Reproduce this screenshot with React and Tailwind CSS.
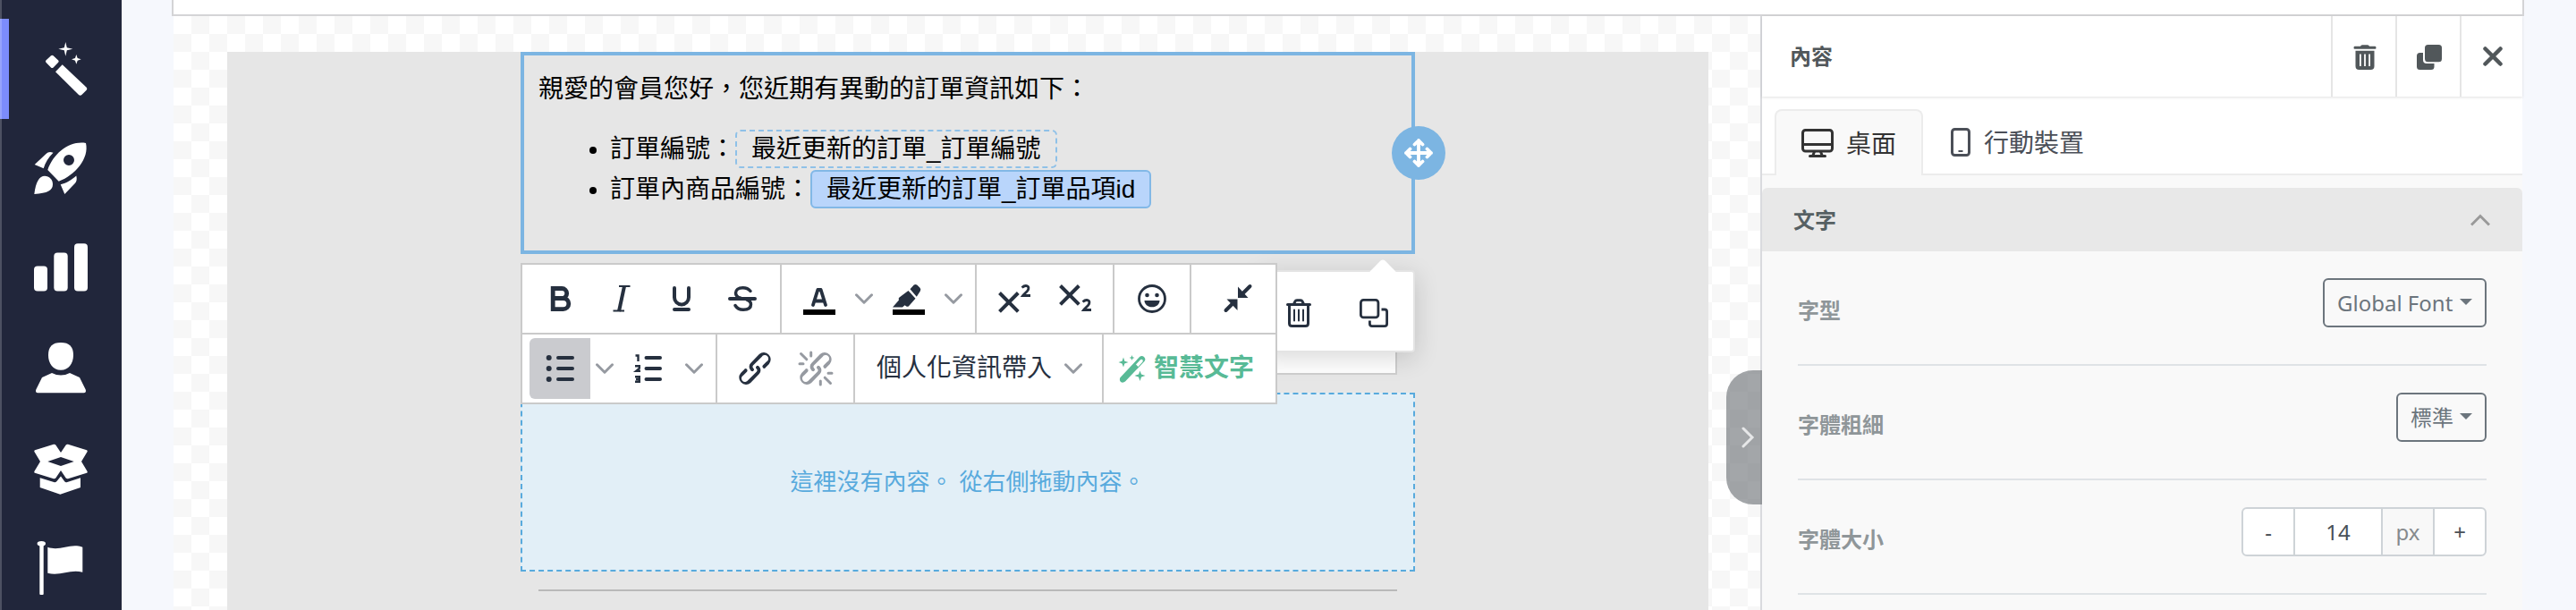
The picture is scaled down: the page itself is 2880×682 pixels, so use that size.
import { useState } from 'react';

const NAV_ITEMS = [
  {
    label: '自動化旅程',
    icon: (
      <>
        <path d="M19 15.3l-5.600 5.300q-1 1.100 0 2.200l5.600 5.700q1.300 1 2.600 0l5.600-5.700q1-1.100 0-2.200l-5.600-5.300q-1.300-1-2.600 0z" />
        <path d="M31.700 25.300L24 33.300l26 25.700q1.700 1.500 3.400 0l5.300-5.200q1.300-1.500 0-3z" />
        <path d="M35.300 0l1.500 6.200 6.500 1.500-6.500 1.500-1.500 6.500-1.500-6.500-6.500-1.500 6.500-1.500z" />
        <path d="M47.300 14l1.400 4 4 1.300-4 1.400-1.400 4-1.300-4-4-1.400 4-1.300z" />
      </>
    ),
  },
  {
    label: '行銷活動',
    icon: (
      <>
        <path
          fillRule="evenodd"
          d="M58 1C40-2 22 12 15.300 31l12.400 12.700C46 37 62 18 58 1zM39 14a6 6 0 1 1 0 12 6 6 0 0 1 0-12z"
        />
        <path d="M21.500 11.700c-4-1.500-6-.500-8 1.300L.7 25l10 4.300c2-7 5.500-12.300 10.800-17.600z" />
        <path d="M47.300 37.500c1 4 .3 6.500-1.500 8.500L34.300 58l-4.600-10.700c7-2 12-4.800 17.600-9.800z" />
        <path d="M.3 58C2 44 6 37.700 12 37.700c5 0 9 4 9 9.300C21 54 15 57 .3 58z" />
      </>
    ),
  },
  {
    label: '數據分析',
    icon: (
      <>
        <rect x="0" y="26.500" width="15" height="28" rx="4" />
        <rect x="22.300" y="11.600" width="15.400" height="43" rx="4" />
        <rect x="45" y="1.300" width="15" height="53.300" rx="4" />
      </>
    ),
  },
  {
    label: '會員',
    icon: (
      <>
        <path d="M30 0c9.500 0 14 4.500 14 14s-5.500 16.800-14 16.800S16 23.500 16 14 20.500 0 30 0z" />
        <path d="M20 34l-11 5L2.300 52.500c-.8 2 0 3.800 2 3.800h51.400c2 0 2.800-1.800 2-3.800L51 39l-11-5q-10 5-20 0z" />
      </>
    ),
  },
  {
    label: '商品',
    icon: (
      <>
        <path
          fillRule="evenodd"
          d="M1 8.300L22 1.700q1.500-.3 2.300.8L30 11l5.700-8.500q.8-1.100 2.300-.8L59 8.300q1 .5.600 1.700L53 21l6.600 11q.4 1.300-.6 1.700L38 40.300q-1.500.2-2.300-.8L30 31l-5.700 8.500q-.8 1-2.300.8L1 33.700Q0 33.300.4 32L7 21 .4 10Q0 8.800 1 8.300zM15.300 21L30 26l14.700-5L30 16z"
        />
        <path d="M6.700 39.300l16.300 5q1.500 0 2.500-1.300l4.500-5.500 4 5.500q1 1.500 2.500 1.300l15.500-5V50l-22.700 7.700L6.700 50z" />
      </>
    ),
  },
  {
    label: '任務',
    icon: (
      <>
        <ellipse cx="8.300" cy=".8" rx="4.700" ry="2.800" />
        <rect x="6.300" y="1" width="4.400" height="57" rx="1" />
        <path d="M15.300 4.700c14 5 25-5 39 0v28c-14-4-25 5-39 1z" />
      </>
    ),
  },
];

const LINK_PATH =
  'M6.200 12.300a1 1 0 0 1 1.400 1.400l-2 2a2 2 0 1 0 2.600 2.800l4.800-4.800a1 1 0 0 0 0-1.400 1 1 0 1 1 1.400-1.300 2.900 2.900 0 0 1 0 4L9.600 20a3.900 3.900 0 0 1-5.500-5.500l2-2zm11.600-.6a1 1 0 0 1-1.400-1.400l2-2a2 2 0 1 0-2.600-2.800L11 10.300a1 1 0 0 0 0 1.400A1 1 0 1 1 9.600 13a2.900 2.900 0 0 1 0-4L14.400 4a3.900 3.900 0 0 1 5.500 5.500l-2 2z';

function ToolButton({ label, active, children }) {
  return (
    <button
      type="button"
      aria-label={label}
      aria-pressed={active}
      className={`w-[68px] h-[68px] flex items-center justify-center ${active ? 'bg-[#cacbcf] rounded-l-md' : ''}`}
    >
      <svg className="w-12 h-12" viewBox="0 0 48 48" fill="none" stroke="currentColor" strokeWidth="4" strokeLinecap="round" strokeLinejoin="round">
        {children}
      </svg>
    </button>
  );
}

function Chevron() {
  return (
    <svg className="w-5 h-3 text-[#969aa1]" viewBox="0 0 20 12" fill="none" stroke="currentColor" strokeWidth="3" strokeLinecap="round" strokeLinejoin="round">
      <path d="M1.500 1.800L10 10.200l8.500-8.400" />
    </svg>
  );
}

function MenuArrow({ label }) {
  return (
    <button type="button" aria-label={label} className="w-8 h-[68px] flex items-center justify-center">
      <Chevron />
    </button>
  );
}

function ToolGroup({ grow, children }) {
  return (
    <div className={`flex justify-end items-center px-2 border-r-2 border-[#cacaca] last:border-r-0 ${grow ? 'flex-1' : ''}`}>
      {children}
    </div>
  );
}

function Toolbar() {
  return (
    <div className="absolute z-20 left-0 top-full mt-[10px] w-[846px] bg-white border-2 border-[#cacaca] text-[#26303f]">
      <div className="flex h-[78px] border-b-2 border-[#cacaca]">
        <ToolGroup>
          <ToolButton label="粗體">
            <path strokeWidth="4.800" strokeLinejoin="miter" d="M16.200 12.500h10a5.300 5.300 0 0 1 0 11h-10zM16.200 23.500h11.500a6 6 0 0 1 0 12.200H16.200z" />
          </ToolButton>
          <ToolButton label="斜體">
            <path strokeLinecap="butt" d="M28 10l-6 28" />
            <path strokeWidth="2" strokeLinecap="butt" d="M22 10h12.500M15.500 37.500H28" />
          </ToolButton>
          <ToolButton label="底線">
            <path d="M16 12v10.500a8 8 0 0 0 16 0V12M16 36h16" />
          </ToolButton>
          <ToolButton label="刪除線">
            <path strokeWidth="3.500" d="M33 15.500c-2-2.500-5-3.800-8.500-3.800-5 0-8 2.300-8 5.800 0 3 2 4.800 5.500 5.800M29 25c3 1 4.500 2.800 4.500 5.300 0 4-3.500 6-8.500 6-4 0-7-1.500-9-4.800" />
            <path d="M10 24h28" />
          </ToolButton>
        </ToolGroup>
        <ToolGroup>
          <ToolButton label="文字顏色">
            <path d="M17 31l5.300-17h3.400L31 31M19 26.500h10" strokeWidth="3.800" />
            <path d="M6 39h36" stroke="#000" strokeWidth="6" strokeLinecap="butt" />
          </ToolButton>
          <MenuArrow label="文字顏色選單" />
          <ToolButton label="背景顏色">
            <g fill="currentColor" stroke="none">
              <path d="M25.500 13.200l4.300-4.600q1.700-1.300 3.400 0l3.300 3.200q1.500 1.700.3 3.600l-4 6.400z" />
              <path d="M23.500 15l8 8.800-7.500 8.400q-1.500 1.200-3 0l-1.500-1-2.500 2.200H6l7-8q-.8-1.800.5-3z" />
            </g>
            <path d="M6 39h36" stroke="#000" strokeWidth="6" strokeLinecap="butt" />
          </ToolButton>
          <MenuArrow label="背景顏色選單" />
        </ToolGroup>
        <ToolGroup>
          <ToolButton label="上標">
            <path strokeLinecap="butt" d="M7.500 17.500l20.800 20.800M28.300 17.500L7.500 38.300" />
            <path strokeWidth="2.800" strokeLinecap="butt" strokeLinejoin="miter" d="M32.500 11.500c4-3.500 8-2 7.300 1.500-.5 2.800-4.500 5-6.300 7.500H42" />
          </ToolButton>
          <ToolButton label="下標">
            <path strokeLinecap="butt" d="M7.500 9.500l20.800 20.800M28.300 9.500L7.500 30.300" />
            <path strokeWidth="2.800" strokeLinecap="butt" strokeLinejoin="miter" d="M32.500 27.500c4-3.500 8-2 7.300 1.500-.5 2.800-4.500 5-6.300 7.500H42" />
          </ToolButton>
        </ToolGroup>
        <ToolGroup>
          <ToolButton label="表情符號">
            <circle cx="24" cy="24" r="14.500" strokeWidth="2.800" />
            <g fill="currentColor" stroke="none">
              <circle cx="18.500" cy="20" r="2.300" />
              <circle cx="29.500" cy="20" r="2.300" />
              <path d="M15.500 26h17c0 4-3.500 7.300-8.500 7.300S15.500 30 15.500 26z" />
            </g>
          </ToolButton>
        </ToolGroup>
        <ToolGroup grow>
          <ToolButton label="收合工具列">
            <path d="M37.500 10l-9 9M10.500 37l8-8" />
            <g fill="currentColor" stroke="none">
              <path d="M24 10.500l11.500 12.500H24z" />
              <path d="M23.500 37V24.500H11.500z" />
            </g>
          </ToolButton>
        </ToolGroup>
      </div>
      <div className="flex h-[76px]">
        <ToolGroup>
          <ToolButton label="項目符號" active>
            <path d="M22 12h16M22 24h16M22 36h16" />
            <g fill="currentColor" stroke="none">
              <circle cx="11.700" cy="12" r="3" />
              <circle cx="11.700" cy="24" r="3" />
              <circle cx="11.700" cy="36" r="3" />
            </g>
          </ToolButton>
          <MenuArrow label="項目符號選單" />
          <ToolButton label="編號清單">
            <path d="M20.500 12H36M20.500 24H36M20.500 36H36" />
            <path strokeWidth="2.400" strokeLinecap="butt" strokeLinejoin="miter" d="M8.500 9.500h3V16M8 21.200h4.800v2.600L9.200 26.800H14M8 33.200h4.800v5.600H8M9 36h4" />
          </ToolButton>
          <MenuArrow label="編號清單選單" />
        </ToolGroup>
        <ToolGroup>
          <ToolButton label="插入連結">
            <path transform="scale(2)" fill="currentColor" stroke="none" d={LINK_PATH} />
          </ToolButton>
          <ToolButton label="移除連結">
            <g className="text-[#969aa1]">
              <path transform="scale(2)" fill="currentColor" stroke="none" d={LINK_PATH} />
              <path strokeWidth="3" d="M7.500 7.500l6.300 6.300M18.700 6v4M6 18.700h4M34.200 34.200l6.300 6.300M29.300 38v4M38 29.300h4" />
            </g>
          </ToolButton>
        </ToolGroup>
        <ToolGroup>
          <button type="button" className="flex items-center gap-[14px] h-[68px] pl-4 pr-[14px] text-[28px] leading-9 whitespace-nowrap">
            個人化資訊帶入
            <Chevron />
          </button>
        </ToolGroup>
        <ToolGroup grow>
          <button type="button" className="flex items-center gap-2 h-[68px] pl-2 pr-4 text-[28px] leading-9 font-bold whitespace-nowrap text-[#58ba96]">
            <svg className="w-8 h-8 shrink-0" viewBox="0 0 32 32" fill="currentColor">
              <path fillRule="evenodd" d="M2.500 26L24 3q2.500-2 5 0 2.500 2.500.500 5L8 30.500q-2.500 2-5 .500-2-2.500-.500-5zM20 11.500l2.500 2.500 5-5.500q.7-1.800-.500-2.500t-2.300.500z" />
              <path d="M6 3.500l1.300 4.200L11.500 9l-4.200 1.500L6 14.500l-1.500-4L.5 9l4-1.300zM15.500 1l.8 2.200 2.200.8-2.200.8-.8 2.200-.8-2.200-2.200-.8 2.200-.8zM24.500 18.500l1.500 4 4.500 1.500-4.500 1.500-1.500 4.500-1.500-4.500-4.500-1.500 4.500-1.500z" />
            </svg>
            智慧文字
          </button>
        </ToolGroup>
      </div>
    </div>
  );
}

function BlockActions() {
  return (
    <div className="absolute z-10 right-0 top-full mt-[18px] pr-[2px] flex items-center h-[92px] bg-white border-2 border-[#e4e4e4] rounded-sm shadow-[0_6px_28px_rgba(0,0,0,0.16)] text-[#26303f]">
      <span className="absolute right-[22px] -top-[10px] w-[24px] h-[24px] rotate-45 bg-white rounded-sm" />
      <button type="button" aria-label="刪除區塊" className="w-[84px] h-full flex items-center justify-center pt-1">
        <svg className="w-8 h-8" viewBox="0 0 32 32" fill="none" stroke="currentColor" strokeWidth="3" strokeLinecap="round">
          <path d="M3.500 6.500h25M10.500 6l1.500-3q.5-1.200 2-1.200h4q1.500 0 2 1.200L21.500 6M5.500 7.500v20q0 3 3 3h15q3 0 3-3v-20" />
          <path strokeWidth="2" d="M11 12.500v12M16 12.500v12M21 12.500v12" />
        </svg>
      </button>
      <button type="button" aria-label="複製區塊" className="w-[84px] h-full flex items-center justify-center pt-1">
        <svg className="w-8 h-8" viewBox="0 0 32 32" fill="none" stroke="currentColor" strokeWidth="2.800">
          <rect x="1.400" y="1.400" width="19.500" height="19.500" rx="3" />
          <path d="M24.500 12H28q2.600 0 2.600 2.600V28q0 2.600-2.600 2.600H14q-2.600 0-2.600-2.600v-3.500" />
        </svg>
      </button>
    </div>
  );
}

function Canvas() {
  return (
    <main className="flex-1 min-w-0 pt-10 pl-[60px] pr-[58px] bg-[conic-gradient(#f7f7f7_25%,#fff_0_50%,#f7f7f7_0_75%,#fff_0)] bg-[length:40px_40px]">
      <div className="h-full bg-[#e6e6e6]">
        <div className="max-w-[1000px] mx-auto font-['Liberation_Sans','Noto_Sans_CJK_TC',sans-serif]">
          <section className="relative px-5 pt-[22px] pb-[50px] text-[28px] text-black">
            <div className="absolute inset-0 border-4 border-[#7cb5e2] pointer-events-none" />
            <p className="leading-10">親愛的會員您好，您近期有異動的訂單資訊如下：</p>
            <ul className="list-disc mt-6 pl-20 leading-[45px]">
              <li>
                訂單編號：
                <span className="px-4 py-1 border-2 border-dashed border-[#8fc1e8] rounded-md">最近更新的訂單_訂單編號</span>
              </li>
              <li>
                訂單內商品編號：
                <span className="px-4 py-1 border-2 border-[#82b8e6] bg-[#b9d5fb] rounded-md">最近更新的訂單_訂單品項id</span>
              </li>
            </ul>
            <button
              type="button"
              aria-label="移動區塊"
              className="absolute -right-[34px] top-1/2 -translate-y-1/2 w-[60px] h-[60px] rounded-full bg-[#7cb5e2] flex items-center justify-center"
            >
              <svg className="w-8 h-8" viewBox="0 0 32 32" fill="none" stroke="#fff" strokeWidth="3.800" strokeLinecap="round" strokeLinejoin="round">
                <path d="M16 2v28M2 16h28M11.500 6.500L16 2l4.500 4.500M11.500 25.500L16 30l4.500-4.500M6.500 11.500L2 16l4.500 4.500M25.500 11.500L30 16l-4.500 4.500" />
              </svg>
            </button>
            <Toolbar />
            <BlockActions />
          </section>

          <div className="mx-5 mt-5 h-[115px] bg-white border-2 border-[#cfcfcf]" />

          <div className="mt-5 h-[200px] flex items-center justify-center border-2 border-dashed border-[#58aadd] bg-[#e2eff7] text-[26px] leading-9 text-[#58aadd]">
            這裡沒有內容。 從右側拖動內容。
          </div>
          <hr className="mx-5 mt-5 border-t-2 border-[#b9b9b9]" />
        </div>
      </div>
    </main>
  );
}

function SettingRow({ label, htmlFor, children }) {
  return (
    <div className="flex items-start justify-between h-32 pt-[30px] border-b-2 border-[#dfe3e6]">
      <label htmlFor={htmlFor} className="py-[18px] text-2xl leading-9 font-bold text-[#8f9699]">{label}</label>
      {children}
    </div>
  );
}

function SettingSelect({ id, option }) {
  return (
    <div className="relative">
      <select id={id} className="block appearance-none h-[55px] pl-[14px] pr-[35px] border-2 border-[#6c757d] rounded-md bg-transparent text-2xl text-[#6c757d]">
        <option>{option}</option>
      </select>
      <svg className="absolute right-4 top-[23px] w-[14px] h-[7px] pointer-events-none" viewBox="0 0 14 7" fill="#6c757d">
        <path d="M0 0h14L7 7z" />
      </svg>
    </div>
  );
}

function SettingsPanel() {
  const [size, setSize] = useState(14);

  return (
    <aside className="relative w-[852px] shrink-0 border-l-2 border-[#d9dade] bg-[#f9f9f9]">
      <button
        type="button"
        aria-label="收合面板"
        className="absolute -left-10 top-[396px] w-10 h-[150px] rounded-l-[30px] bg-[#6b7074]/62 flex items-center justify-center pl-2"
      >
        <svg className="w-4 h-6" viewBox="0 0 16 24" fill="none" stroke="#e6e7e8" strokeWidth="3" strokeLinecap="round">
          <path d="M3 2l10 10L3 22" />
        </svg>
      </button>

      <header className="relative flex h-[90px] items-stretch bg-white text-[#51575a] shadow-[0_1px_3px_rgba(0,0,0,0.12)]">
        <h2 className="flex-1 self-center pl-[31px] text-2xl leading-9 font-bold">內容</h2>
        <button type="button" aria-label="刪除" className="w-[72px] pt-[2px] pl-[2px] flex items-center justify-center border-l-2 border-[#e5e5e5]">
          <svg className="w-[26px] h-7" viewBox="0 0 26 28" fill="currentColor">
            <path d="M8 1.700Q8.500.2 10 .2h6q1.500 0 2 1.500h6.500q1 0 1 1.600t-1 1.500h-23q-1 0-1-1.500t1-1.600z" />
            <path fillRule="evenodd" d="M2.500 6.800h21V24q0 4-4 4h-13q-4 0-4-4zM7 10.500V24h1.800V10.500zM12.100 10.500V24h1.800V10.500zM17.200 10.500V24H19V10.500z" />
          </svg>
        </button>
        <button type="button" aria-label="複製" className="w-[72px] pt-[2px] pl-[2px] flex items-center justify-center border-l-2 border-[#e5e5e5]">
          <svg className="w-7 h-7" viewBox="0 0 28 28" fill="currentColor">
            <rect x="9" y="0" width="19" height="19.300" rx="3.500" />
            <path d="M3.500 9H7v8q0 4 4 4h8.500v3.500Q19.500 28 16 28H3.500Q0 28 0 24.500v-12Q0 9 3.500 9z" />
          </svg>
        </button>
        <button type="button" aria-label="關閉" className="w-[70px] pl-[2px] flex items-center justify-center border-l-2 border-[#e5e5e5]">
          <svg className="w-6 h-6" viewBox="0 0 24 24" fill="none" stroke="currentColor" strokeWidth="4.500" strokeLinecap="round">
            <path d="M3.500 3.500l17 17M20.500 3.500l-17 17" />
          </svg>
        </button>
      </header>

      <div role="tablist" className="flex h-[88px] pt-[14px] pl-3 bg-white shadow-[inset_0_-2px_0_#ececec] text-[28px] leading-9">
        <button
          type="button"
          role="tab"
          aria-selected="true"
          className="ml-[2px] flex items-center gap-[14px] px-7 border-2 border-b-0 border-[#ececec] rounded-t-lg bg-[#f9f9f9] text-[#333]"
        >
          <svg className="w-9 h-8" viewBox="0 0 36 32" fill="none" stroke="currentColor" strokeWidth="3" strokeLinecap="round">
            <rect x="1.500" y="1.500" width="33" height="23.500" rx="3" />
            <path d="M2 17.500h32M14.500 25.500l-1.500 4M21.500 25.500l1.500 4M9.500 30.500h17" />
          </svg>
          桌面
        </button>
        <button type="button" role="tab" aria-selected="false" className="flex items-center gap-[14px] px-[30px] text-[#4b4f58]">
          <svg className="w-6 h-8" viewBox="0 0 24 32" fill="none" stroke="currentColor" strokeWidth="3">
            <rect x="2.500" y="1.500" width="19" height="29" rx="3" />
            <path strokeWidth="2" d="M9.500 26h5" />
          </svg>
          行動裝置
        </button>
      </div>

      <button
        type="button"
        className="mt-[14px] w-full h-[71px] pl-[35px] pr-9 flex items-center justify-between rounded-t-md bg-[#e8e8e8] text-2xl leading-9 font-bold text-[#566063]"
      >
        文字
        <svg className="w-[22px] h-[14px]" viewBox="0 0 22 14" fill="none" stroke="#999" strokeWidth="3">
          <path d="M1 12.500l10-10 10 10" />
        </svg>
      </button>

      <div className="px-10">
        <SettingRow label="字型" htmlFor="font-family">
          <SettingSelect id="font-family" option="Global Font" />
        </SettingRow>
        <SettingRow label="字體粗細" htmlFor="font-weight">
          <SettingSelect id="font-weight" option="標準" />
        </SettingRow>
        <SettingRow label="字體大小" htmlFor="font-size">
          <div className="flex h-[55px] border-2 border-[#ced3d7] rounded-md bg-white overflow-hidden text-2xl text-[#495057]">
            <button type="button" aria-label="縮小" onClick={() => setSize(size - 1)} className="w-[58px] border-r-2 border-[#ced3d7]">-</button>
            <input
              id="font-size"
              type="text"
              value={size}
              onChange={(e) => setSize(Number(e.target.value) || 0)}
              className="w-[98px] text-center border-r-2 border-[#ced3d7] outline-none"
            />
            <span className="w-[58px] flex items-center justify-center bg-[#f8f8f8] border-r-2 border-[#ced3d7] text-[#868a8d]">px</span>
            <button type="button" aria-label="放大" onClick={() => setSize(size + 1)} className="w-14">+</button>
          </div>
        </SettingRow>
      </div>
    </aside>
  );
}

function App() {
  return (
    <div lang="zh-Hant" className="flex h-screen overflow-hidden bg-[#f6f8fd] font-['Noto_Sans','Noto_Sans_CJK_TC',sans-serif]">
      <nav className="relative w-[136px] shrink-0 pt-[21px] bg-[#21263b]">
        {NAV_ITEMS.map((item, i) => (
          <a
            key={item.label}
            href="#"
            aria-label={item.label}
            className={`flex h-28 items-center justify-center border-l-10 pr-[10px] ${i === 0 ? 'border-[#7c8cfc]' : 'border-transparent'}`}
          >
            <svg className="w-[60px] h-[60px] overflow-visible text-white" viewBox="0 0 60 60" fill="currentColor">
              {item.icon}
            </svg>
          </a>
        ))}
        <span className="absolute inset-y-0 left-0 w-[2px] bg-white/20" />
      </nav>

      <div className="flex-1 min-w-0 flex flex-col pl-14 pr-[58px]">
        <div className="h-[18px] shrink-0 bg-white border-2 border-t-0 border-[#d4d4d6]" />
        <div className="flex flex-1 min-h-0 mx-[2px]">
          <Canvas />
          <SettingsPanel />
        </div>
      </div>
    </div>
  );
}

export default App;
